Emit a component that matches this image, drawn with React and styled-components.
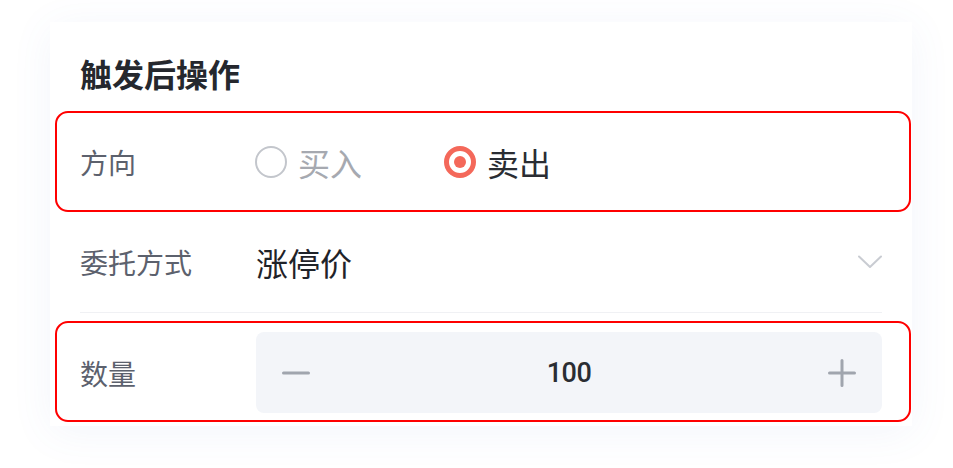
import React from "react";
import styled, { createGlobalStyle } from "styled-components";

const Global = createGlobalStyle`
  html, body { margin: 0; padding: 0; background: #ffffff; }
  body { font-family: "Noto Sans CJK SC", "Noto Sans", sans-serif; }
`;

const Page = styled.div`
  width: 953px;
  height: 468px;
  padding: 22px 0 0 50px;
  box-sizing: border-box;
  background: #ffffff;
`;

const Card = styled.div`
  width: 862px;
  box-sizing: border-box;
  padding: 0 30px;
  background: #ffffff;
  box-shadow: 0 6px 40px rgba(90, 110, 200, 0.07);
`;

const Title = styled.div`
  padding: 35px 0 23px;
  line-height: 32px;
  font-size: 32px;
  font-weight: 700;
  color: #25282e;
`;

const Row = styled.div`
  position: relative;
  box-sizing: border-box;
  display: flex;
  align-items: center;
  height: ${(p) => p.$h}px;
  padding: ${(p) => p.$pad || "0"};
  border-bottom: ${(p) => (p.$divider ? "1px solid #f0f1f4" : "none")};
`;

const Highlight = styled.div`
  position: absolute;
  left: -25px;
  right: -29px;
  top: ${(p) => p.$top}px;
  bottom: ${(p) => p.$bottom}px;
  border: 2.5px solid #ff0000;
  border-radius: 13px;
  pointer-events: none;
`;

const Label = styled.div`
  width: 176px;
  flex: none;
  font-size: 28px;
  color: #5c616d;
  line-height: 1;
`;

const Options = styled.div`
  display: flex;
  align-items: center;
  margin-left: -1px;
`;

const Option = styled.div`
  display: flex;
  align-items: center;
  width: 189px;
  font-size: 32px;
  line-height: 1;
  color: ${(p) => (p.$on ? "#2a2d33" : "#a6a9b0")};
`;

const Radio = styled.span`
  box-sizing: border-box;
  width: 32px;
  height: 32px;
  border-radius: 50%;
  margin-right: 11px;
  flex: none;
  display: flex;
  align-items: center;
  justify-content: center;
  border: ${(p) => (p.$on ? "5px solid #f4685a" : "2px solid #c3c6cc")};
  &::after {
    content: "";
    display: ${(p) => (p.$on ? "block" : "none")};
    width: 12px;
    height: 12px;
    border-radius: 50%;
    background: #f4685a;
  }
`;

const Value = styled.div`
  flex: 1;
  font-size: 32px;
  line-height: 1;
  color: #1f2329;
`;

const Chevron = styled.svg`
  flex: none;
  width: 24px;
  height: 14px;
`;

const Stepper = styled.div`
  flex: 1;
  height: 81px;
  display: flex;
  align-items: center;
  justify-content: space-between;
  padding: 0 26px;
  box-sizing: border-box;
  background: #f3f5f9;
  border-radius: 8px;
`;

const StepIcon = styled.svg`
  width: 28px;
  height: 28px;
  flex: none;
`;

const Qty = styled.div`
  font-family: Roboto, "Noto Sans", sans-serif;
  font-size: 27px;
  font-weight: 500;
  letter-spacing: -0.5px;
  color: #2a2d33;
`;

export default function App() {
  return (
    <Page>
      <Global />
      <Card>
        <Title>触发后操作</Title>
        <Row $h={100}>
          <Highlight $top={-1} $bottom={0} />
          <Label>方向</Label>
          <Options>
            <Option>
              <Radio />
              买入
            </Option>
            <Option $on>
              <Radio $on />
              卖出
            </Option>
          </Options>
        </Row>
        <Row $h={101} $divider $pad="0">
          <Label>委托方式</Label>
          <Value>涨停价</Value>
          <Chevron viewBox="0 0 24 14">
            <path d="M1 1.5 L12 12 L23 1.5" fill="none" stroke="#c9ccd2" strokeWidth="2" strokeLinecap="round" strokeLinejoin="round" />
          </Chevron>
        </Row>
        <Row $h={113} $pad="19px 0 13px">
          <Highlight $top={8} $bottom={4} />
          <Label>数量</Label>
          <Stepper>
            <StepIcon viewBox="0 0 28 28">
              <path d="M1.5 14 H26.5" stroke="#a0a5ae" strokeWidth="3" strokeLinecap="round" />
            </StepIcon>
            <Qty>100</Qty>
            <StepIcon viewBox="0 0 28 28">
              <path d="M1.5 14 H26.5 M14 1.5 V26.5" stroke="#a0a5ae" strokeWidth="3" strokeLinecap="round" />
            </StepIcon>
          </Stepper>
        </Row>
      </Card>
    </Page>
  );
}
